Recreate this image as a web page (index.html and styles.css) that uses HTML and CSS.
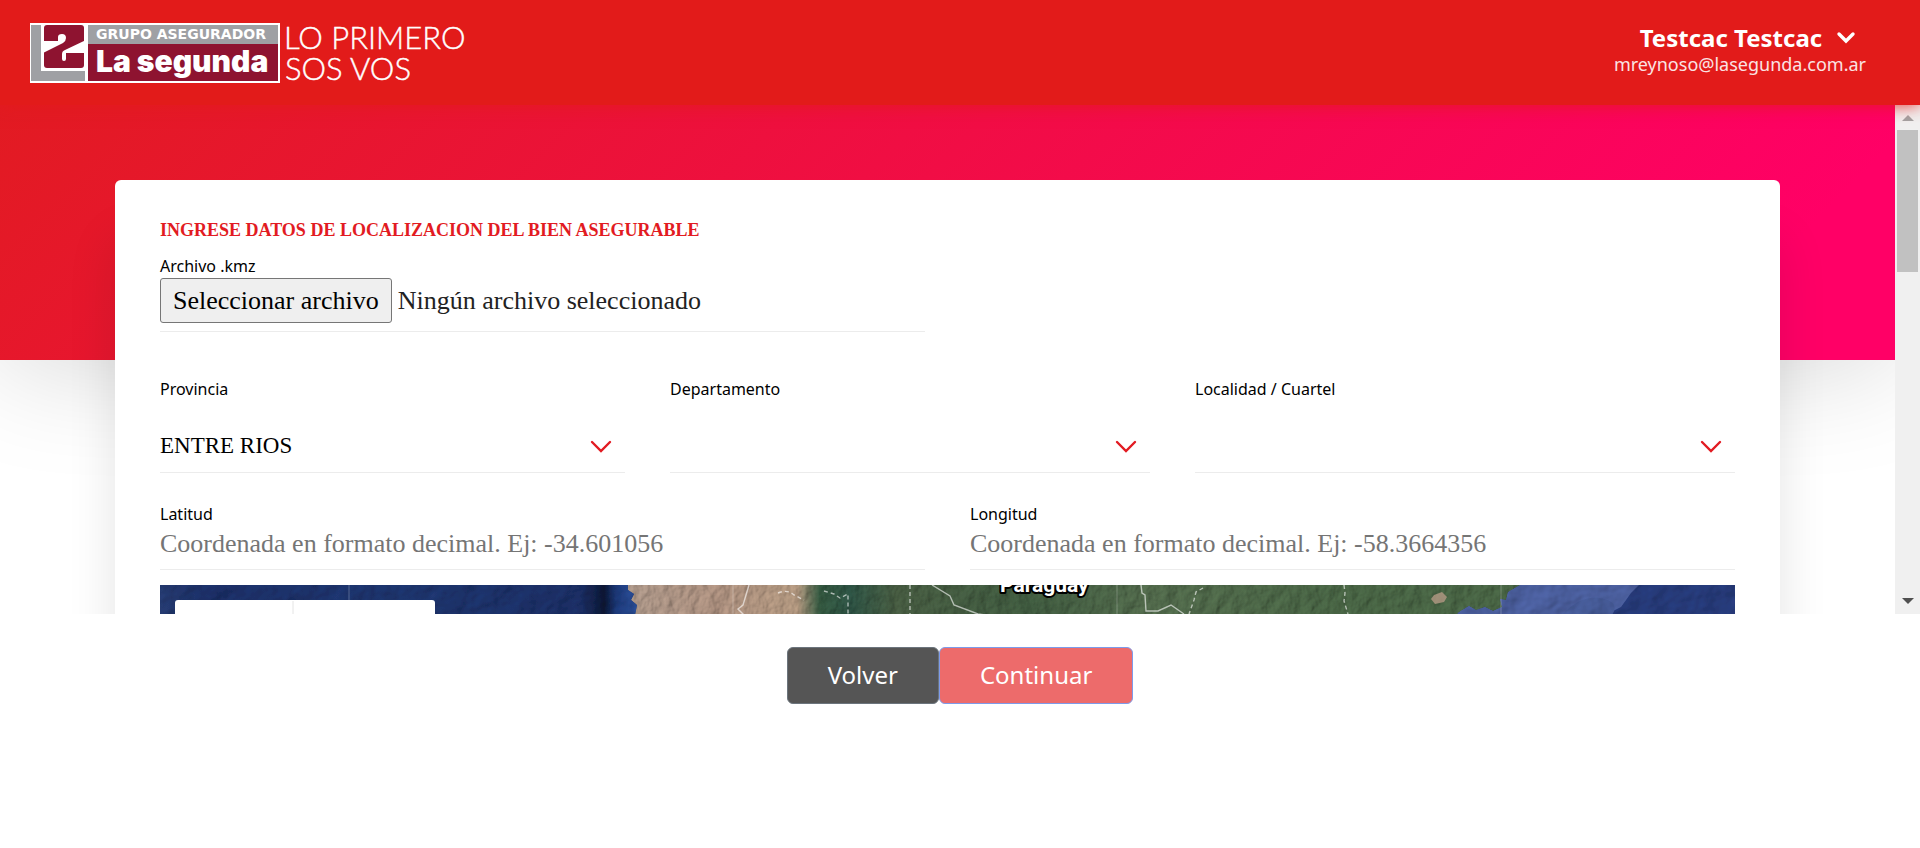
FILE: index.html
```html
<!DOCTYPE html>
<html lang="es">
<head>
<meta charset="utf-8">
<meta name="viewport" content="width=device-width, initial-scale=1">
<title>La Segunda - Localización</title>
<link rel="stylesheet" href="styles.css">
</head>
<body>
<header class="topbar">
  <svg class="logo" viewBox="0 0 440 60" role="img" aria-label="La Segunda">
    <rect width="250" height="60" fill="#fff"/>
    <rect x="1" y="2" width="54" height="56" fill="#9fa0a4"/>
    <path d="M11 2h45v46H11z" fill="#fff"/>
    <rect x="14" y="2" width="40" height="43" rx="3" fill="#8e1330"/>
    <path d="M13 18h15v-4q0-3 4-3t4 4q0 3-3 5L13 30z" fill="#fff"/>
    <path d="M56 17L35 27q-3 1-3 4v5q0 2 2 2t2-2v-6h20z" fill="#fff"/>
    <rect x="58" y="2" width="190" height="19" fill="#9fa0a4"/>
    <rect x="58" y="21" width="190" height="37" fill="#8e1330"/>
    <text x="66" y="16" class="logo-group">GRUPO ASEGURADOR</text>
    <text x="66" y="49" class="logo-name">La segunda</text>
    <text x="254" y="26" class="logo-claim">LO PRIMERO</text>
    <text x="255" y="57" class="logo-claim">SOS VOS</text>
  </svg>
  <button class="account" type="button">
    <span class="account-name">Testcac Testcac
      <svg class="account-caret" viewBox="0 0 20 14"><path d="M3 3l7 7 7-7" fill="none" stroke="#fff" stroke-width="3.4" stroke-linecap="round"/></svg>
    </span>
    <span class="account-mail">mreynoso@lasegunda.com.ar</span>
  </button>
</header>

<main>
  <div class="viewport">
    <div class="page">
      <div class="band"></div>
      <form class="card" id="location">
        <h1 class="title">INGRESE DATOS DE LOCALIZACION DEL BIEN ASEGURABLE</h1>
        <div class="row halves">
          <div class="field">
            <label class="label" for="kmz">Archivo .kmz</label>
            <div class="file">
              <input class="file-input" type="file" id="kmz" accept=".kmz">
              <label class="file-button" for="kmz">Seleccionar archivo</label>
              <span class="file-name">Ningún archivo seleccionado</span>
            </div>
          </div>
        </div>
        <div class="row places">
          <div class="field">
            <label class="label" for="prov">Provincia</label>
            <div class="pick">
              <select class="select" id="prov"><option>ENTRE RIOS</option></select>
              <svg class="pick-caret" viewBox="0 0 22 14"><path d="M2 2l9 9 9-9" fill="none" stroke="#e21b22" stroke-width="2.4" stroke-linecap="round"/></svg>
            </div>
          </div>
          <div class="field">
            <label class="label" for="dep">Departamento</label>
            <div class="pick">
              <select class="select" id="dep"><option></option></select>
              <svg class="pick-caret" viewBox="0 0 22 14"><path d="M2 2l9 9 9-9" fill="none" stroke="#e21b22" stroke-width="2.4" stroke-linecap="round"/></svg>
            </div>
          </div>
          <div class="field">
            <label class="label" for="loc">Localidad / Cuartel</label>
            <div class="pick">
              <select class="select" id="loc"><option></option></select>
              <svg class="pick-caret" viewBox="0 0 22 14"><path d="M2 2l9 9 9-9" fill="none" stroke="#e21b22" stroke-width="2.4" stroke-linecap="round"/></svg>
            </div>
          </div>
        </div>
        <div class="row halves coords">
          <div class="field">
            <label class="label" for="lat">Latitud</label>
            <input class="input" id="lat" type="text" placeholder="Coordenada en formato decimal. Ej: -34.601056">
          </div>
          <div class="field">
            <label class="label" for="lon">Longitud</label>
            <input class="input" id="lon" type="text" placeholder="Coordenada en formato decimal. Ej: -58.3664356">
          </div>
        </div>
        <svg class="map" viewBox="0 0 1575 360" preserveAspectRatio="xMinYMin slice">
          <defs>
            <linearGradient id="sea" x1="0" x2="1">
              <stop offset="0" stop-color="#24396f"/><stop offset=".1" stop-color="#1c3069"/><stop offset=".5" stop-color="#1e356f"/><stop offset=".88" stop-color="#1b2f66"/><stop offset=".925" stop-color="#0a1532"/><stop offset=".95" stop-color="#1d3a7c"/><stop offset="1" stop-color="#2c519b"/>
            </linearGradient>
            <linearGradient id="land" x1="0" x2="1">
              <stop offset="0" stop-color="#aa9587"/><stop offset=".1" stop-color="#ab8f7e"/><stop offset=".19" stop-color="#b0967e"/><stop offset=".215" stop-color="#33573f"/><stop offset=".25" stop-color="#2d5243"/><stop offset=".3" stop-color="#465b41"/><stop offset=".45" stop-color="#3f5a3f"/><stop offset=".58" stop-color="#51694b"/><stop offset=".8" stop-color="#486444"/><stop offset="1" stop-color="#486444"/>
            </linearGradient>
            <filter id="relief" x="0" y="0" width="100%" height="100%">
              <feTurbulence type="fractalNoise" baseFrequency=".09 .07" numOctaves="4" seed="8" result="n"/>
              <feDiffuseLighting in="n" surfaceScale="2" lighting-color="#fff" result="l"><feDistantLight azimuth="215" elevation="48"/></feDiffuseLighting>
              <feComposite in="SourceGraphic" in2="l" operator="arithmetic" k1="1.1" k2=".18" k3="0" k4="0"/>
              <feComposite in2="SourceGraphic" operator="in"/>
            </filter>
            <filter id="seabed" x="0" y="0" width="100%" height="100%">
              <feTurbulence type="fractalNoise" baseFrequency=".04 .05" numOctaves="3" seed="3" result="n"/>
              <feDiffuseLighting in="n" surfaceScale="3" lighting-color="#fff" result="l"><feDistantLight azimuth="215" elevation="48"/></feDiffuseLighting>
              <feComposite in="SourceGraphic" in2="l" operator="arithmetic" k1=".9" k2=".28" k3="0" k4="0"/>
            </filter>
          </defs>
          <g filter="url(#seabed)">
            <rect width="480" height="360" fill="url(#sea)"/>
            <path d="M1270 0h305v360h-305z" fill="#4c60a0"/>
            <path d="M1479 0h96v360h-150V40l36-18 10-14z" fill="#273b7b"/>
            <path d="M1402 30q20-22 42-16 16 4 8 16z" fill="#465b98"/>
          </g>
          <path d="M468 0h892l-12 7-2 8-6-1 2 8-9 4-8-4-9 3-7-4-10 6-8 9-20 14v310H478V40l-3-10 2-10-6-5 3-6-6-4z" fill="url(#land)" filter="url(#relief)"/>
          <path d="M1274 10l8-3 5 5-3 5-9 2-4-5z" fill="#b49a85" opacity=".8"/>
          <g fill="none" stroke="#fff" stroke-opacity=".25">
            <path d="M189 0v360M573 0v360M957 0v360M1341 0v360"/>
          </g>
          <g fill="none" stroke="#fff" stroke-opacity=".6" stroke-width="1.4">
            <path d="M772 0l18 11 4 9 24 9 8 1M981 0l1 8 3 2 1 16h12l13-6 13 9M589 0l-6 20-5 4 6 6"/>
            <path d="M664 6l10 3 6 4 8-4v20M750 0v29M1043 3l-7 4-2 8-5 14M1184 0l1 8-1 8 4 13M618 8q10-4 16 2l10 5" stroke-dasharray="4 3"/>
          </g>
          <text x="840" y="7" class="map-country">Paraguay</text>
          <rect x="15" y="15" width="260" height="60" rx="3" fill="#fff"/>
          <path d="M133 16v58" stroke="#e4e4e4"/>
        </svg>
      </form>
    </div>
    <div class="scrollbar" aria-hidden="true">
      <svg class="arrow" viewBox="0 0 12 6"><path d="M0 6l6-6 6 6z" fill="#a3a3a3"/></svg>
      <div class="thumb"></div>
      <svg class="arrow" viewBox="0 0 12 6"><path d="M0 0l6 6 6-6z" fill="#505050"/></svg>
    </div>
  </div>
  <div class="actions">
    <button class="btn btn-back" type="button">Volver</button>
    <button class="btn btn-next" type="submit" form="location">Continuar</button>
  </div>
</main>
</body>
</html>
```

FILE: styles.css
```css
* { box-sizing: border-box; }
body {
  margin: 0;
  background: #fff;
  color: #000;
  font-family: "Noto Sans", "Open Sans", sans-serif;
}

/* Header */
.topbar {
  position: relative;
  z-index: 2;
  display: flex;
  justify-content: space-between;
  align-items: flex-start;
  padding: 22px 54px 22px 30px;
  background: #e21b1a;
  box-shadow: 0 0 16px rgba(226, 27, 26, .9);
}
.logo { width: 440px; height: 60px; margin-top: 1px; overflow: visible; }
.logo-group { font: 700 14px "DejaVu Sans", sans-serif; fill: #fff; }
.logo-name { font: 900 30px "Inter", sans-serif; fill: #fff; }
.logo-claim { font: 300 31px "Lato", sans-serif; fill: #fff; stroke: #fff; stroke-width: .4px; }
.account {
  display: flex;
  flex-direction: column;
  align-items: center;
  padding: 0;
  border: 0;
  background: none;
  color: #fff;
  font-family: inherit;
}
.account-name {
  display: flex;
  align-items: center;
  gap: 14px;
  padding-left: 16px;
  font-size: 24px;
  font-weight: 700;
  line-height: 32px;
}
.account-caret { width: 20px; height: 14px; }
.account-mail { font-size: 18px; line-height: 20px; color: #fbe3e3; }

/* Scrolling area */
.viewport { display: flex; height: 60vh; overflow: hidden; }
.page { flex: 1; overflow: hidden; }
.band {
  height: 255px;
  background: linear-gradient(135deg, #e21b22 0%, #ff0066 90%);
  box-shadow: 0 0 120px rgba(0, 0, 0, .18);
}
.card {
  position: relative;
  margin: -180px 115px 0;
  padding: 37px 45px 45px;
  border-radius: 6px;
  background: #fff;
  box-shadow: 0 60px 50px rgba(0, 0, 0, .11);
}
.title {
  margin: 0;
  color: #e21b22;
  font: 700 18px/26px "Liberation Serif", serif;
}
.row { display: grid; gap: 45px; }
.halves { grid-template-columns: 1fr 1fr; }
.places { grid-template-columns: 465fr 480fr 540fr; margin-top: 45px; }
.coords { margin-top: 29px; }
.field { display: flex; flex-direction: column; min-width: 0; }
.label { font-size: 16px; line-height: 24px; }
.file, .pick, .input { border: 0; border-bottom: 1px solid #ececec; }
.file {
  display: flex;
  align-items: center;
  gap: 6px;
  padding-bottom: 8px;
  font: 26px/43px "Liberation Serif", serif;
}
.title + .row { margin-top: 11px; }
.file-input { position: absolute; width: 1px; height: 1px; opacity: 0; }
.file-button {
  padding: 0 12px;
  border: 1px solid #767676;
  border-radius: 3px;
  background: #efefef;
}
.file-name { color: #222; }
.pick {
  display: flex;
  align-items: center;
  height: 72px;
  padding: 20px 13px 0 0;
}
.select {
  flex: 1;
  min-width: 0;
  padding: 0 0 2px;
  border: 0;
  background: none;
  appearance: none;
  color: #000;
  font: 23px/32px "Liberation Serif", serif;
}
.pick-caret { width: 22px; height: 14px; }
.input {
  width: 100%;
  height: 44px;
  padding: 0 0 8px;
  font: 26px/34px "Liberation Serif", serif;
}
.input::placeholder { color: #757575; opacity: 1; }
.map { display: block; width: 100%; height: 360px; margin-top: 15px; }
.map-country {
  font: 700 21px "Roboto", sans-serif;
  fill: #fff;
  stroke: #000;
  stroke-width: 4px;
  stroke-linejoin: round;
  paint-order: stroke;
}

/* Scrollbar */
.scrollbar {
  display: flex;
  flex-direction: column;
  align-items: center;
  width: 25px;
  padding: 10px 0;
  background: #f0f0f0;
}
.arrow { width: 12px; height: 6px; }
.thumb { width: 21px; height: 142px; margin: 9px 0 auto; background: #c1c1c1; }

/* Actions */
.actions { display: flex; justify-content: center; padding: 33px 0; }
.btn {
  padding: 0 40px 1px;
  border: 1px solid #6c757d;
  border-radius: 6px;
  color: #fff;
  font: 24px/54px "Noto Sans", sans-serif;
}
.btn-back { background: #555; }
.btn-next { border-color: #7d9bea; background: #ed6b6b; }
```
